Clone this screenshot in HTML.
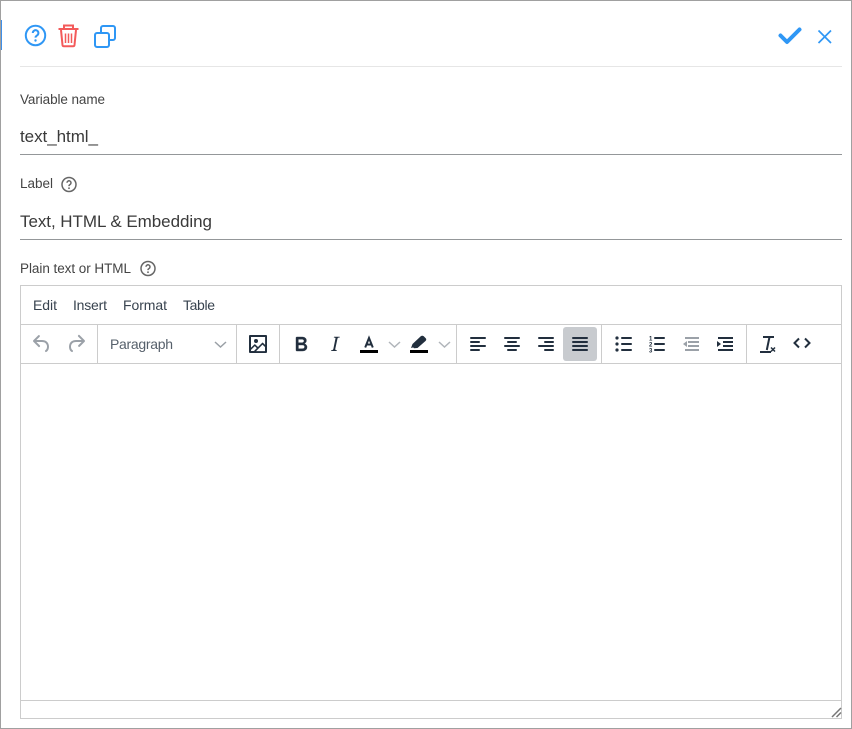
<!DOCTYPE html>
<html><head><meta charset="utf-8"><style>
html,body{margin:0;padding:0;background:#fff;width:852px;height:729px;overflow:hidden}
svg{display:block}
text{font-family:"Liberation Sans",sans-serif}
.l{font-size:13.5px;fill:#444}
.v{font-size:17px;fill:#3a3a3a}
.m{font-size:14px;fill:#38434f}
</style></head><body>
<svg width="852" height="729" viewBox="0 0 852 729" xmlns="http://www.w3.org/2000/svg">
<rect width="852" height="729" fill="#fff"/>
<rect x="0" y="0" width="852" height="1" fill="#a0a0a0"/>
<rect x="0" y="0" width="1" height="729" fill="#a0a0a0"/>
<rect x="851" y="0" width="1" height="729" fill="#a0a0a0"/>
<rect x="0" y="728" width="852" height="1" fill="#a0a0a0"/>
<rect x="1" y="20" width="1" height="30" fill="#3f8fe8"/>

<!-- header icons -->
<g fill="none" stroke="#2f97f5" stroke-width="2">
<circle cx="35.500" cy="35.500" r="9.700"/>
<path d="M32.800 33a2.800 2.800 0 1 1 4.400 2.300c-1 .7-1.700 1.100-1.700 2.300" stroke-width="2"/>
<rect x="95" y="33" width="14" height="14" rx="2"/>
<path d="M101 32v-4a2 2 0 0 1 2-2h10a2 2 0 0 1 2 2v10a2 2 0 0 1-2 2h-3.500"/>
</g>
<circle cx="35.500" cy="40.500" r="1.200" fill="#2f97f5"/>
<g fill="none" stroke="#f35a5a" stroke-width="2">
<path d="M58.500 29h20"/>
<path d="M64 28v-2.500h9v2.500"/>
<path d="M61 30l1.500 15a1.500 1.500 0 0 0 1.500 1.300h9a1.500 1.500 0 0 0 1.500-1.300l1.500-15"/>
<path d="M65.500 33.500v9.500M68.500 33.500v9.500M71.500 33.500v9.500" stroke-width="1.500"/>
</g>
<path d="M780.500 35.500l6.500 6.500 12.500-12.500" fill="none" stroke="#2f97f5" stroke-width="4" stroke-linecap="round" stroke-linejoin="round"/>
<path d="M818.500 30.500l12.500 12.500M831 30.500l-12.500 12.500" fill="none" stroke="#2f97f5" stroke-width="1.700"/>
<rect x="20" y="66" width="822" height="1" fill="#e6e6e6"/>

<!-- fields -->
<text class="l" x="20" y="104" textLength="85" lengthAdjust="spacing">Variable name</text>
<text class="v" x="20" y="142" textLength="78" lengthAdjust="spacing">text_html_</text>
<rect x="20" y="154" width="822" height="1" fill="#949799"/>
<text class="l" x="20" y="188" textLength="33" lengthAdjust="spacing">Label</text>
<text class="v" x="20" y="227" textLength="192" lengthAdjust="spacing">Text, HTML &amp; Embedding</text>
<rect x="20" y="239" width="822" height="1" fill="#949799"/>
<text class="l" x="20" y="273" textLength="111" lengthAdjust="spacing">Plain text or HTML</text>
<g fill="none" stroke="#666" stroke-width="1.500">
<circle cx="69" cy="184.500" r="7"/>
<path d="M67 182.800a2 2 0 1 1 3.200 1.600c-.8.500-1.200.9-1.200 1.700"/>
<circle cx="148" cy="268.500" r="7"/>
<path d="M146 266.800a2 2 0 1 1 3.200 1.600c-.8.500-1.200.9-1.200 1.700"/>
</g>
<circle cx="69" cy="188.200" r=".9" fill="#666"/>
<circle cx="148" cy="272.200" r=".9" fill="#666"/>

<!-- editor frame -->
<rect x="20.500" y="285.500" width="821" height="433" fill="#fff" stroke="#ccc"/>
<g fill="#ccc">
<rect x="21" y="324" width="820" height="1"/>
<rect x="21" y="363" width="820" height="1"/>
<rect x="21" y="700" width="820" height="1"/>
<rect x="97" y="325" width="1" height="38"/>
<rect x="236" y="325" width="1" height="38"/>
<rect x="279" y="325" width="1" height="38"/>
<rect x="456" y="325" width="1" height="38"/>
<rect x="601" y="325" width="1" height="38"/>
<rect x="746" y="325" width="1" height="38"/>
</g>
<text class="m" x="33" y="310" textLength="24" lengthAdjust="spacing">Edit</text>
<text class="m" x="73" y="310" textLength="34" lengthAdjust="spacing">Insert</text>
<text class="m" x="123" y="310" textLength="44" lengthAdjust="spacing">Format</text>
<text class="m" x="183" y="310" textLength="32" lengthAdjust="spacing">Table</text>
<text class="m" x="110" y="349" textLength="63" lengthAdjust="spacing" style="fill:#56606b">Paragraph</text>

<rect x="563" y="327" width="34" height="34" rx="3" fill="#c8cbcf"/>

<!-- undo / redo -->
<g transform="translate(30,332)" fill="#222f3e" fill-opacity=".45"><path d="M6.400 8H12c3.700 0 6.200 2 6.800 5.100.6 2.700-.4 5.600-2.300 6.800a1 1 0 0 1-1-1.800c1.100-.6 1.800-2.700 1.400-4.600-.5-2.100-2.100-3.500-4.900-3.500H6.400l3.300 3.300a1 1 0 1 1-1.400 1.400l-5-5a1 1 0 0 1 0-1.400l5-5a1 1 0 0 1 1.400 1.400L6.400 8z"/></g>
<g transform="translate(64,332)" fill="#222f3e" fill-opacity=".45"><path d="M17.600 10H12c-2.800 0-4.400 1.400-4.900 3.500-.4 2 .3 4 1.400 4.600a1 1 0 1 1-1 1.800c-2-1.200-2.900-4.100-2.300-6.800.6-3 3-5.100 6.800-5.100h5.600l-3.300-3.300a1 1 0 1 1 1.400-1.400l5 5a1 1 0 0 1 0 1.400l-5 5a1 1 0 0 1-1.400-1.400l3.300-3.300z"/></g>
<path d="M215 342l5.500 5 5.500-5" fill="none" stroke="#9aa0a6" stroke-width="1.500"/>

<!-- image -->
<g transform="translate(246,332)" fill="#222f3e"><path fill-rule="evenodd" d="M5 15.700l3.300-3.200c.3-.3.700-.3 1 0L12 15l4.100-4.100c.3-.3.800-.3 1 0l2 2V5H5v10.700zM5 18V19h3l2.800-2.900-2-2L5 17.900zm14-3l-2.500-2.400-6.400 6.500H19v-4zM4 3h16c.6 0 1 .4 1 1v16c0 .6-.4 1-1 1H4a1 1 0 0 1-1-1V4c0-.6.4-1 1-1zm6 8a2 2 0 1 0 0-4 2 2 0 0 0 0 4z"/></g>

<!-- bold / italic -->
<g transform="translate(289,332)" fill="#222f3e" stroke="#222f3e" stroke-width=".4"><path fill-rule="evenodd" d="M7.800 19c-.3 0-.5 0-.6-.2l-.2-.5V5.700c0-.2 0-.4.2-.5l.6-.2h5c1.500 0 2.700.3 3.500 1 .7.600 1.100 1.400 1.100 2.500a3 3 0 0 1-.6 1.900c-.4.600-1 1-1.600 1.200.4.100.9.300 1.300.6s.8.700 1 1.200c.4.400.5 1 .5 1.600 0 1.300-.4 2.300-1.300 3-.8.700-2.100 1-3.800 1H7.800zm5-8.300c.6 0 1.200-.1 1.600-.5.400-.3.6-.7.6-1.300 0-1.100-.8-1.700-2.300-1.700H9.300v3.500h3.400zm.5 6c.7 0 1.300-.1 1.700-.4.400-.4.600-.9.600-1.500s-.2-1-.7-1.400c-.4-.3-1-.4-2-.4H9.400v3.800h4z"/></g>
<g transform="translate(323,332)" fill="#222f3e"><path d="M16.700 4.700l-.1.900h-.3c-.6 0-1 0-1.400.3-.3.300-.4.600-.5 1.100l-2.100 9.800v.6c0 .5.400.8 1.400.8h.2l-.2.800H8l.2-.8h.2c1.100 0 1.800-.5 2-1.500l2-9.800.1-.5c0-.6-.4-.8-1.400-.8h-.3l.2-.9h5.800z"/></g>

<!-- text colour -->
<path d="M365.200 347.500l3.800-9.500 3.800 9.500M366.500 344.500h5" fill="none" stroke="#222f3e" stroke-width="2"/>
<rect x="360" y="350" width="18" height="3" fill="#000"/>
<path d="M389 342l5.500 5 5.500-5" fill="none" stroke="#b0b5ba" stroke-width="1.500"/>
<!-- highlight -->
<path d="M411 348l1.500-4 8-7.500c1-1 2.500-1 3.500 0l1.500 1.500c1 1 1 2 0 3l-8 7-3.500.2-.8-.8z" fill="#222f3e"/>
<rect x="410" y="350" width="18" height="3" fill="#000"/>
<path d="M439 342l5.500 5 5.500-5" fill="none" stroke="#b0b5ba" stroke-width="1.500"/>

<!-- align -->
<g transform="translate(466,332)" fill="#222f3e"><path d="M5 5h14c.6 0 1 .4 1 1s-.4 1-1 1H5a1 1 0 1 1 0-2zm0 4h8c.6 0 1 .4 1 1s-.4 1-1 1H5a1 1 0 1 1 0-2zm0 8h8c.6 0 1 .4 1 1s-.4 1-1 1H5a1 1 0 0 1 0-2zm0-4h14c.6 0 1 .4 1 1s-.4 1-1 1H5a1 1 0 0 1 0-2z"/></g>
<g transform="translate(500,332)" fill="#222f3e"><path d="M5 5h14c.6 0 1 .4 1 1s-.4 1-1 1H5a1 1 0 1 1 0-2zm3 4h8c.6 0 1 .4 1 1s-.4 1-1 1H8a1 1 0 1 1 0-2zm0 8h8c.6 0 1 .4 1 1s-.4 1-1 1H8a1 1 0 0 1 0-2zm-3-4h14c.6 0 1 .4 1 1s-.4 1-1 1H5a1 1 0 0 1 0-2z"/></g>
<g transform="translate(534,332)" fill="#222f3e"><path d="M5 5h14c.6 0 1 .4 1 1s-.4 1-1 1H5a1 1 0 1 1 0-2zm6 4h8c.6 0 1 .4 1 1s-.4 1-1 1h-8a1 1 0 0 1 0-2zm0 8h8c.6 0 1 .4 1 1s-.4 1-1 1h-8a1 1 0 0 1 0-2zm-6-4h14c.6 0 1 .4 1 1s-.4 1-1 1H5a1 1 0 0 1 0-2z"/></g>
<g transform="translate(568,332)" fill="#222f3e"><path d="M5 5h14c.6 0 1 .4 1 1s-.4 1-1 1H5a1 1 0 1 1 0-2zm0 4h14c.6 0 1 .4 1 1s-.4 1-1 1H5a1 1 0 1 1 0-2zm0 4h14c.6 0 1 .4 1 1s-.4 1-1 1H5a1 1 0 0 1 0-2zm0 4h14c.6 0 1 .4 1 1s-.4 1-1 1H5a1 1 0 0 1 0-2z"/></g>

<!-- bullets -->
<g fill="#222f3e">
<circle cx="617" cy="338" r="1.600"/><circle cx="617" cy="344" r="1.600"/><circle cx="617" cy="350" r="1.600"/>
<rect x="621" y="337" width="11" height="2" rx="1"/><rect x="621" y="343" width="11" height="2" rx="1"/><rect x="621" y="349" width="11" height="2" rx="1"/>
<!-- numbered -->
<rect x="654" y="337" width="11" height="2" rx="1"/><rect x="654" y="343" width="11" height="2" rx="1"/><rect x="654" y="349" width="11" height="2" rx="1"/>
<text x="649" y="340.500" style="font-size:6px;font-weight:bold">1</text>
<text x="649" y="346.500" style="font-size:6px;font-weight:bold">2</text>
<text x="649" y="352.500" style="font-size:6px;font-weight:bold">3</text>
</g>
<!-- outdent -->
<g fill="#222f3e" fill-opacity=".45">
<rect x="685" y="337" width="14" height="2"/><rect x="688" y="341" width="11" height="2"/><rect x="688" y="345" width="11" height="2"/><rect x="685" y="349" width="14" height="2"/>
<path d="M687 341v6l-4-3z"/>
</g>
<!-- indent -->
<g fill="#222f3e">
<rect x="718" y="337" width="15" height="2"/><rect x="723" y="341" width="10" height="2"/><rect x="723" y="345" width="10" height="2"/><rect x="718" y="349" width="15" height="2"/>
<path d="M717 341v6l4-3z"/>
</g>
<!-- remove format -->
<path d="M763 337h11M769.500 337l-2.700 13" fill="none" stroke="#222f3e" stroke-width="2"/>
<rect x="760" y="351" width="11" height="2" fill="#222f3e"/>
<path d="M771 347.500l4 4M775 347.500l-4 4" fill="none" stroke="#222f3e" stroke-width="1.500"/>
<!-- code -->
<path d="M799 338.500l-4.500 4.500 4.500 4.500M805 338.500l4.500 4.500-4.500 4.500" fill="none" stroke="#222f3e" stroke-width="2"/>

<!-- resize handle -->
<path d="M832 717l9-9M836.500 717l4.500-4.500" fill="none" stroke="#777" stroke-width="1.500"/>
</svg>
</body></html>
